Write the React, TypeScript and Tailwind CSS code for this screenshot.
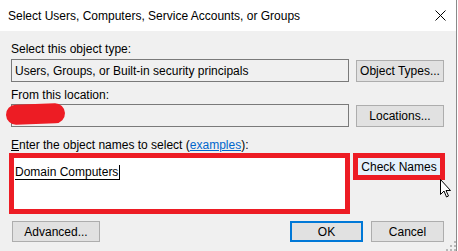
import React from "react";

const FONT = { fontFamily: '"Liberation Sans", Arial, sans-serif' };

function WinButton({
  label,
  className = "",
}: {
  label: React.ReactNode;
  className?: string;
}) {
  return (
    <div
      className={`flex items-center justify-center border border-[#adadad] bg-[#e1e1e1] text-[12px] text-black ${className}`}
    >
      {label}
    </div>
  );
}

function CloseIcon() {
  return (
    <svg width="11" height="11" viewBox="0 0 11 11" className="block">
      <path d="M0.5 0.5 L10.5 10.5 M10.5 0.5 L0.5 10.5" stroke="#000" strokeWidth="1" />
    </svg>
  );
}

function ArrowCursor() {
  return (
    <svg width="13" height="20" viewBox="0 0 13 20" className="block">
      <path
        d="M0.5 0.5 L0.5 15.5 L4 12 L6.5 18 L8.5 17 L6 11.5 L10.5 11.5 Z"
        fill="#fff"
        stroke="#000"
        strokeWidth="1"
        strokeLinejoin="miter"
      />
    </svg>
  );
}

function SizeGrip() {
  const dots = [
    [8, 0],
    [4, 4],
    [8, 4],
    [0, 8],
    [4, 8],
    [8, 8],
  ];
  return (
    <svg width="10" height="10" viewBox="0 0 10 10" className="block">
      {dots.map(([x, y]) => (
        <rect key={`${x}-${y}`} x={x} y={y} width="2" height="2" fill="#b8b8b8" />
      ))}
    </svg>
  );
}

export default function App() {
  return (
    <div className="relative h-[251px] w-[458px] overflow-hidden bg-white" style={FONT}>
      <div className="flex h-[251px] w-[457px] flex-col border-r border-[#8a8a8a]">
        {/* title bar */}
        <div className="flex h-[31px] shrink-0 items-center justify-between bg-white pl-[8px] pr-[10px]">
          <span className="text-[12px] text-black">
            Select Users, Computers, Service Accounts, or Groups
          </span>
          <CloseIcon />
        </div>

        {/* body */}
        <div className="flex flex-1 flex-col bg-[#f0f0f0] pl-[11px] pt-[11px]">
          <p className="h-[15px] text-[12px] leading-[15px] text-black">
            Select this object type:
          </p>
          <div className="mt-[2px] flex items-center">
            <div className="flex h-[23px] w-[338px] items-center border border-[#7a7a7a] bg-[#f0f0f0] pl-[3px] text-[12px] text-black">
              Users, Groups, or Built-in security principals
            </div>
            <WinButton label="Object Types..." className="ml-[7px] h-[22px] w-[88px]" />
          </div>

          <p className="mt-[6px] h-[15px] text-[12px] leading-[15px] text-black">
            From this location:
          </p>
          <div className="relative mt-[1px] flex items-center">
            <div className="h-[23px] w-[338px] border border-[#7a7a7a] bg-[#f0f0f0]" />
            <WinButton label="Locations..." className="ml-[7px] mt-[1px] h-[22px] w-[88px]" />
            {/* redacted scribble */}
            <div className="absolute left-[-5px] top-[0px] h-[20px] w-[59px] -rotate-[2deg] rounded-[10px] bg-[#ed1c24]" />
          </div>

          <p className="mt-[11px] h-[15px] text-[12px] leading-[15px] text-black">
            <span className="underline">E</span>nter the object names to select (
            <span className="text-[#0066cc] underline">examples</span>):
          </p>

          <div className="flex items-start">
            <div className="-ml-[2px] h-[61px] w-[341px] border-[5px] border-[#ed1c24] bg-white pl-[1px] pt-[1px]">
              <span className="inline-block border-b border-r border-black pr-[1px] text-[12px] leading-[14px] text-black">
                Domain Computers
              </span>
            </div>
            <div className="ml-[3px] flex h-[27px] w-[92px] items-center justify-center border-[5px] border-[#ed1c24] bg-[#e5f1fb] text-[12px] text-black">
              Check Names
            </div>
          </div>

          <div className="mt-[7px] flex items-center">
            <WinButton label="Advanced..." className="ml-[1px] h-[21px] w-[88px]" />
            <div className="ml-[190px] flex h-[21px] w-[73px] items-center justify-center border-2 border-[#0078d7] bg-[#e1e1e1] text-[12px] text-black">
              OK
            </div>
            <WinButton label="Cancel" className="ml-[8px] h-[21px] w-[73px]" />
          </div>
        </div>
      </div>

      <div className="absolute left-[440px] top-[179px]">
        <ArrowCursor />
      </div>
      <div className="absolute left-[446px] top-[241px]">
        <SizeGrip />
      </div>
    </div>
  );
}
